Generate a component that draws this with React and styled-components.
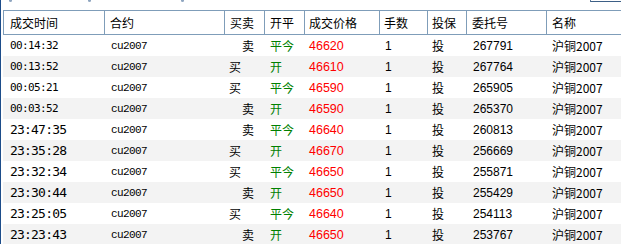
import styled, { createGlobalStyle } from 'styled-components';

const GlobalStyle = createGlobalStyle`
  html, body {
    margin: 0;
    padding: 0;
    background: #ffffff;
    overflow: hidden;
  }
`;

const COLS = '101px 120px 40px 40px 75px 48px 39px 80px 80px';
const CJK = `"Noto Sans CJK SC", "Noto Sans", sans-serif`;

const trades = [
  { time: '00:14:32', side: '卖', offset: '平今', price: '46620', order: '267791' },
  { time: '00:13:52', side: '买', offset: '开', price: '46610', order: '267764' },
  { time: '00:05:21', side: '买', offset: '平今', price: '46590', order: '265905' },
  { time: '00:03:52', side: '卖', offset: '开', price: '46590', order: '265370' },
  { time: '23:47:35', side: '卖', offset: '平今', price: '46640', order: '260813' },
  { time: '23:35:28', side: '买', offset: '开', price: '46670', order: '256669' },
  { time: '23:32:34', side: '买', offset: '平今', price: '46650', order: '255871' },
  { time: '23:30:44', side: '卖', offset: '开', price: '46650', order: '255429' },
  { time: '23:25:05', side: '买', offset: '平今', price: '46640', order: '254113' },
  { time: '23:23:43', side: '卖', offset: '开', price: '46650', order: '253767' },
];

const headers = ['成交时间', '合约', '买卖', '开平', '成交价格', '手数', '投保', '委托号', '名称'];

export default function App() {
  return (
    <>
      <GlobalStyle />
      <Frame>
        <TopStrip>
          <Mark $left={6} />
          <Mark $left={76} />
          <Mark $left={90} />
          <Spacer />
          <ButtonEdge />
        </TopStrip>

        <Grid>
          <HeaderRow>
            {headers.map((h, i) => (
              <HeadCell key={h} $first={i === 0} $pad={i >= 4 && i <= 6 ? 4 : 5}>
                {h}
              </HeadCell>
            ))}
          </HeaderRow>

          {trades.map((t, i) => (
            <Row key={t.order} $striped={i % 2 === 1}>
              <TimeCell $wide={t.time.startsWith('23')}>{t.time}</TimeCell>
              <CodeCell>cu2007</CodeCell>
              <SideCell $sell={t.side === '卖'}>{t.side}</SideCell>
              <OffsetCell>{t.offset}</OffsetCell>
              <PriceCell>{t.price}</PriceCell>
              <NumCell $pad={5}>1</NumCell>
              <CjkCell $pad={4}>投</CjkCell>
              <NumCell $pad={6}>{t.order}</NumCell>
              <CjkCell $pad={5}>沪铜2007</CjkCell>
            </Row>
          ))}
        </Grid>
      </Frame>
    </>
  );
}

const Frame = styled.div`
  width: 621px;
  height: 244px;
  box-sizing: border-box;
  border-left: 1px solid #1d4d8a;
  padding-left: 2px;
  display: flex;
  flex-direction: column;
  overflow: hidden;
  background: #ffffff;
`;

const TopStrip = styled.div`
  height: 10px;
  flex: none;
  display: flex;
  align-items: flex-start;
`;

const Mark = styled.span`
  width: 3px;
  height: 2px;
  margin-left: ${p => p.$left}px;
  background: #8fa6c0;
  border-radius: 0 0 2px 2px;
`;

const Spacer = styled.span`
  flex: 1;
`;

const ButtonEdge = styled.span`
  width: 31px;
  height: 1px;
  border-left: 1px solid #5f7c9c;
  border-bottom: 1px solid #3d5f86;
  margin-right: -1px;
`;

const Grid = styled.div`
  display: flex;
  flex-direction: column;
  width: max-content;
`;

const HeaderRow = styled.div`
  display: grid;
  grid-template-columns: ${COLS};
  height: 25px;
  box-sizing: border-box;
  border-top: 1px solid #7f9db9;
  border-bottom: 1px solid #7f9db9;
  border-left: 1px solid #7f9db9;
  background: #ffffff;
`;

const HeadCell = styled.div`
  box-sizing: border-box;
  border-right: 1px solid #7f9db9;
  padding-left: ${p => (p.$first ? 6 : p.$pad)}px;
  display: flex;
  align-items: center;
  font-family: ${CJK};
  font-size: 12px;
  color: #000000;
  white-space: nowrap;
`;

const Row = styled.div`
  display: grid;
  grid-template-columns: ${COLS};
  height: 21px;
  padding-left: 1px;
  background: ${p => (p.$striped ? '#f3f3f3' : '#ffffff')};
`;

const Cell = styled.div`
  display: flex;
  align-items: center;
  white-space: nowrap;
  color: #000000;
  padding-left: ${p => p.$pad ?? 5}px;
`;

const TimeCell = styled(Cell)`
  padding-left: 6px;
  font-family: "DejaVu Sans Mono", monospace;
  font-size: ${p => (p.$wide ? 13 : 11)}px;
  letter-spacing: ${p => (p.$wide ? -0.8 : -0.62)}px;
`;

const CodeCell = styled(Cell)`
  padding-left: 6px;
  font-family: "Liberation Mono", monospace;
  font-size: 11px;
  letter-spacing: -0.6px;
`;

const SideCell = styled(Cell)`
  padding-left: ${p => (p.$sell ? 17 : 4)}px;
  font-family: ${CJK};
  font-size: 12px;
`;

const OffsetCell = styled(Cell)`
  font-family: ${CJK};
  font-size: 12px;
  color: #008000;
`;

const PriceCell = styled(Cell)`
  padding-left: 4px;
  font-family: "Liberation Sans", Arial, sans-serif;
  font-size: 12.5px;
  color: #ff0000;
`;

const NumCell = styled(Cell)`
  font-family: "Liberation Sans", Arial, sans-serif;
  font-size: 12px;
`;

const CjkCell = styled(Cell)`
  font-family: ${CJK};
  font-size: 12px;
`;
